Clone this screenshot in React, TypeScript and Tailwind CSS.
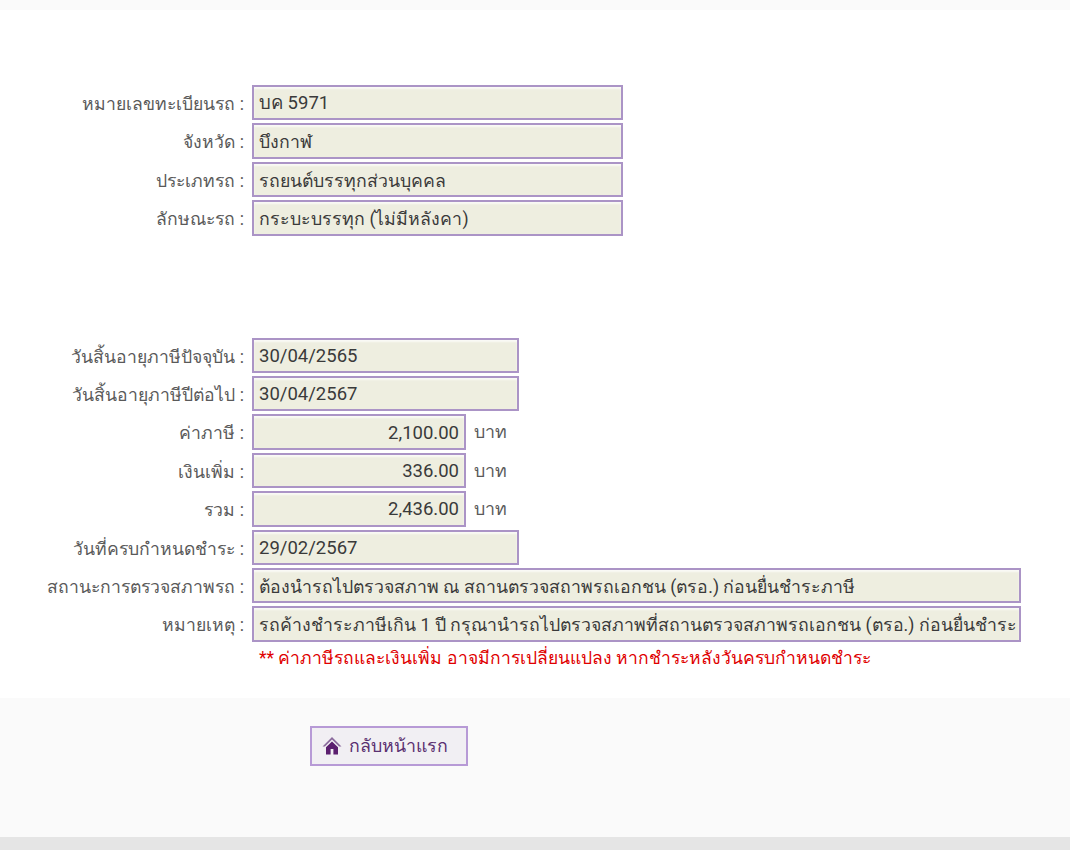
import React from 'react';

const FONT = 'font-[Roboto,"Noto_Sans",sans-serif]';

function Field({ label, value, width, right, unit, numeric }: Readonly<{ label: string; value: string; width: string; right?: boolean; unit?: string; numeric?: boolean }>) {
  return (
    <div className="flex items-center h-[35.4px]">
      <div className="w-[244px] shrink-0 pt-[3px] text-right text-[17.6px] text-[#5a5a5a] whitespace-nowrap">{label} :</div>
      <div className={`ml-2 h-full shrink-0 flex items-center pt-[3px] px-[5px] border-2 border-[#ab94c6] bg-[#eeeee0] shadow-[inset_0_2px_2px_rgba(255,255,255,0.7)] text-[#3a3a3a] whitespace-nowrap overflow-hidden ${numeric ? 'text-[18.5px]' : 'text-[17.7px]'} ${width} ${right ? 'justify-end' : ''}`}>
        {value}
      </div>
      {unit && <span className="ml-2 pt-[1px] text-[17.8px] text-[#5a5a5a]">{unit}</span>}
    </div>
  );
}

export default function App() {
  return (
    <div className={`${FONT} w-[1070px] h-[850px] overflow-hidden bg-white flex flex-col`}>
      <div className="h-[10px] bg-[#fafafa]" />
      <div className="h-[688px] pt-[75px]">
        <div className="flex flex-col gap-[3px]">
          <Field label="หมายเลขทะเบียนรถ" value="บค 5971" width="w-[371px]" numeric />
          <Field label="จังหวัด" value="บึงกาฬ" width="w-[371px]" />
          <Field label="ประเภทรถ" value="รถยนต์บรรทุกส่วนบุคคล" width="w-[371px]" />
          <Field label="ลักษณะรถ" value="กระบะบรรทุก (ไม่มีหลังคา)" width="w-[371px]" />
        </div>
        <div className="flex flex-col gap-[3px] mt-[102px]">
          <Field label="วันสิ้นอายุภาษีปัจจุบัน" value="30/04/2565" width="w-[267px]" numeric />
          <Field label="วันสิ้นอายุภาษีปีต่อไป" value="30/04/2567" width="w-[267px]" numeric />
          <Field label="ค่าภาษี" value="2,100.00" width="w-[214px]" right unit="บาท" numeric />
          <Field label="เงินเพิ่ม" value="336.00" width="w-[214px]" right unit="บาท" numeric />
          <Field label="รวม" value="2,436.00" width="w-[214px]" right unit="บาท" numeric />
          <Field label="วันที่ครบกำหนดชำระ" value="29/02/2567" width="w-[267px]" numeric />
          <Field label="สถานะการตรวจสภาพรถ" value="ต้องนำรถไปตรวจสภาพ ณ สถานตรวจสถาพรถเอกชน (ตรอ.) ก่อนยื่นชำระภาษี" width="w-[769px]" />
          <Field label="หมายเหตุ" value="รถค้างชำระภาษีเกิน 1 ปี กรุณานำรถไปตรวจสภาพที่สถานตรวจสภาพรถเอกชน (ตรอ.) ก่อนยื่นชำระ" width="w-[769px]" />
        </div>
        <p className="ml-[259px] mt-[3px] text-[17.5px] text-[#e00000] whitespace-nowrap">** ค่าภาษีรถและเงินเพิ่ม อาจมีการเปลี่ยนแปลง หากชำระหลังวันครบกำหนดชำระ</p>
      </div>
      <div className="h-[139px] bg-[#fafafa] pt-[28px] pl-[310px]">
        <div className="w-[158px] h-[40px] flex items-center gap-[7px] pl-[10px] border-2 border-[#b79ad6] bg-[#f1eff3] text-[17.8px] text-[#5a3070]">
          <svg viewBox="0 0 20 20" className="w-[20px] h-[20px] shrink-0" fill="#5b1f6f">
            <path d="M10 1 0.5 10.4h2.4L10 3.6l7.1 6.8h2.4z" fill="#8a6a9c" />
            <path fillRule="evenodd" d="M10 5.6 4 11.2V18.5h12V11.2zM8.6 13h2.8v5.5H8.6z" />
          </svg>
          กลับหน้าแรก
        </div>
      </div>
      <div className="flex-1 bg-[#e5e5e5]" />
    </div>
  );
}
